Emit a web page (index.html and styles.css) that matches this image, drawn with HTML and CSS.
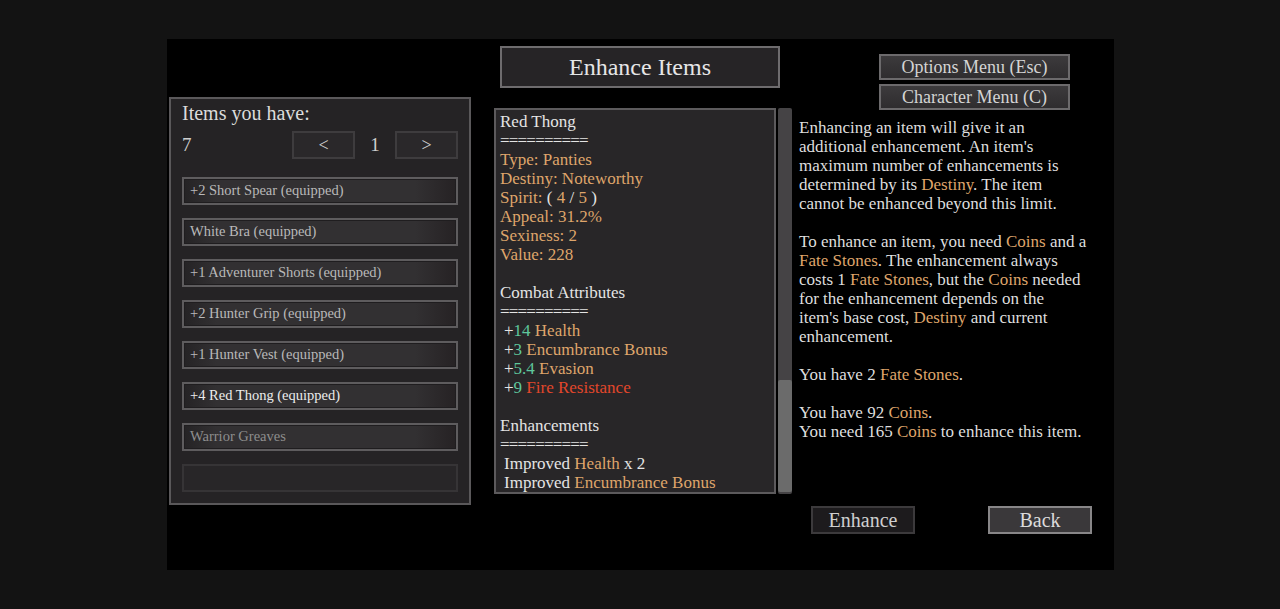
FILE: index.html
```html
<!DOCTYPE html>
<html lang="en">
<head>
    <meta charset="UTF-8">
    <meta name="viewport" content="width=device-width, initial-scale=1.0">
    <title>Enhance Items</title>
    <link rel="stylesheet" href="styles.css">
</head>
<body>
    <div class="stage">
        <!-- Inventory list -->
        <section class="inventory">
            <div class="inv-title">Items you have:</div>
            <div class="pager">
                <span class="count">7</span>
                <button class="page-btn">&lt;</button>
                <span class="page-num">1</span>
                <button class="page-btn">&gt;</button>
            </div>
            <ul class="item-list">
                <li class="item">+2 Short Spear (equipped)</li>
                <li class="item">White Bra (equipped)</li>
                <li class="item">+1 Adventurer Shorts (equipped)</li>
                <li class="item">+2 Hunter Grip (equipped)</li>
                <li class="item">+1 Hunter Vest (equipped)</li>
                <li class="item selected">+4 Red Thong (equipped)</li>
                <li class="item dim">Warrior Greaves</li>
                <li class="item empty"></li>
            </ul>
        </section>

        <!-- Item details -->
        <section class="details-col">
            <div class="title-box">Enhance Items</div>
            <div class="details-wrap">
                <div class="details">
                    <div>Red Thong</div>
                    <div class="eq">==========</div>
                    <div class="o">Type: Panties</div>
                    <div class="o">Destiny: Noteworthy</div>
                    <div><span class="o">Spirit:</span> ( <span class="o">4</span> / <span class="o">5</span> )</div>
                    <div class="o">Appeal: 31.2%</div>
                    <div class="o">Sexiness: 2</div>
                    <div class="o">Value: 228</div>
                    <div>&nbsp;</div>
                    <div>Combat Attributes</div>
                    <div class="eq">==========</div>
                    <div class="ind">+<span class="g">14</span> <span class="o">Health</span></div>
                    <div class="ind">+<span class="g">3</span> <span class="o">Encumbrance Bonus</span></div>
                    <div class="ind">+<span class="g">5.4</span> <span class="o">Evasion</span></div>
                    <div class="ind">+<span class="g">9</span> <span class="r">Fire Resistance</span></div>
                    <div>&nbsp;</div>
                    <div>Enhancements</div>
                    <div class="eq">==========</div>
                    <div class="ind">Improved <span class="o">Health</span> x 2</div>
                    <div class="ind">Improved <span class="o">Encumbrance Bonus</span></div>
                </div>
                <div class="scrollbar"><div class="thumb"></div></div>
            </div>
        </section>

        <!-- Info and actions -->
        <section class="info-col">
            <div class="menu-btns">
                <button class="menu-btn">Options Menu (Esc)</button>
                <button class="menu-btn">Character Menu (C)</button>
            </div>
            <div class="info-text">
                <p>Enhancing an item will give it an<br>additional enhancement. An item's<br>maximum number of enhancements is<br>determined by its <span class="o">Destiny</span>. The item<br>cannot be enhanced beyond this limit.</p>
                <p>To enhance an item, you need <span class="o">Coins</span> and a<br><span class="o">Fate Stones</span>. The enhancement always<br>costs 1 <span class="o">Fate Stones</span>, but the <span class="o">Coins</span> needed<br>for the enhancement depends on the<br>item's base cost, <span class="o">Destiny</span> and current<br>enhancement.</p>
                <p>You have 2 <span class="o">Fate Stones</span>.</p>
                <p>You have 92 <span class="o">Coins</span>.<br>You need 165 <span class="o">Coins</span> to enhance this item.</p>
            </div>
            <div class="actions">
                <button class="act-btn enhance">Enhance</button>
                <button class="act-btn back">Back</button>
            </div>
        </section>
    </div>
</body>
</html>
```

FILE: styles.css
```css
/* General Styles */
body {
    margin: 0;
    background: #131313;
    font-family: "Liberation Serif", "Times New Roman", serif;
    color: #e2e2e2;
}

button {
    font-family: inherit;
    cursor: pointer;
}

.stage {
    margin: 39px 0 0 167px;
    width: 947px;
    height: 531px;
    background: #000;
    display: flex;
    align-items: stretch;
    padding-left: 2px;
    box-sizing: border-box;
}

/* Inventory */
.inventory {
    margin-top: 58px;
    width: 302px;
    height: 408px;
    box-sizing: border-box;
    border: 2px solid #5a585a;
    background: #252325;
    padding: 3px 11px 0;
}

.inv-title {
    font-size: 20px;
    line-height: 22px;
    color: #dcdcdc;
}

.pager {
    margin-top: 7px;
    display: flex;
    align-items: center;
    height: 28px;
}

.count {
    flex: 1;
    font-size: 19px;
    color: #cfcfcf;
}

.page-num {
    width: 40px;
    text-align: center;
    font-size: 19px;
    color: #cfcfcf;
}

.page-btn {
    width: 63px;
    height: 28px;
    margin: 0;
    border: 2px solid #3e3c3e;
    background: #2a282a;
    color: #cfcfcf;
    font-size: 18px;
}

.item-list {
    list-style: none;
    margin: 18px 0 0;
    padding: 0;
    display: flex;
    flex-direction: column;
    gap: 13px;
}

.item {
    height: 28px;
    box-sizing: border-box;
    border: 2px solid #5e5c5e;
    box-shadow: inset 0 0 0 1px #1f1d1f;
    background: linear-gradient(to right, #252325, #323032 12%, #323032 85%, #262224);
    padding-left: 6px;
    font-size: 14.5px;
    line-height: 22px;
    color: #b9b9b9;
}

.item.selected {
    color: #ececec;
}

.item.dim {
    color: #8e8e8e;
}

.item.empty {
    border-color: #363436;
    background: #282628;
    box-shadow: none;
}

/* Details */
.details-col {
    margin-left: 23px;
    width: 298px;
    padding-top: 7px;
}

.title-box {
    margin-left: 6px;
    width: 280px;
    height: 42px;
    box-sizing: border-box;
    border: 2px solid #6e6c6e;
    background: #262426;
    display: flex;
    align-items: center;
    justify-content: center;
    font-size: 24px;
    color: #e6e6e6;
}

.details-wrap {
    margin-top: 20px;
    display: flex;
    gap: 2px;
    height: 386px;
}

.details {
    width: 282px;
    box-sizing: border-box;
    border: 2px solid #5c5a5c;
    background: #282628;
    padding: 2px 4px 0;
    font-size: 17px;
    line-height: 19px;
    color: #e4e4e4;
    overflow: hidden;
}

.details > div {
    white-space: pre;
}

.details .eq {
    letter-spacing: -0.8px;
}

.details .ind {
    padding-left: 4px;
}

.scrollbar {
    width: 14px;
    background: #454345;
    border-radius: 2px;
    display: flex;
    flex-direction: column;
    justify-content: flex-end;
    padding-bottom: 2px;
    box-sizing: border-box;
}

.thumb {
    height: 112px;
    background: #6b6b6b;
    border-radius: 2px;
}

.o { color: #dfa56b; }
.g { color: #5fc79c; }
.r { color: #e2462b; }

/* Info column */
.info-col {
    margin-left: 7px;
    width: 293px;
    padding-top: 15px;
    display: flex;
    flex-direction: column;
}

.menu-btns {
    margin-left: 80px;
    display: flex;
    flex-direction: column;
    gap: 4px;
}

.menu-btn {
    width: 191px;
    height: 26px;
    margin: 0;
    padding: 0;
    border: 2px solid #6c6a6c;
    background: linear-gradient(#3c3a3c, #2f2d2f);
    color: #d4d4d4;
    font-size: 18px;
    line-height: 20px;
}

.info-text {
    margin-top: 8px;
    font-size: 17px;
    line-height: 19px;
    color: #dedede;
}

.info-text p {
    margin: 0 0 19px;
}

.actions {
    margin-top: auto;
    margin-bottom: 36px;
    display: flex;
    justify-content: space-between;
    padding-left: 12px;
}

.act-btn {
    width: 104px;
    height: 28px;
    margin: 0;
    padding: 0;
    font-size: 20px;
    line-height: 22px;
}

.act-btn.enhance {
    border: 2px solid #3c3a3c;
    background: #1d1b1d;
    color: #cfcfcf;
}

.act-btn.back {
    border: 2px solid #888688;
    background: #3a383a;
    color: #dcdcdc;
}
```
